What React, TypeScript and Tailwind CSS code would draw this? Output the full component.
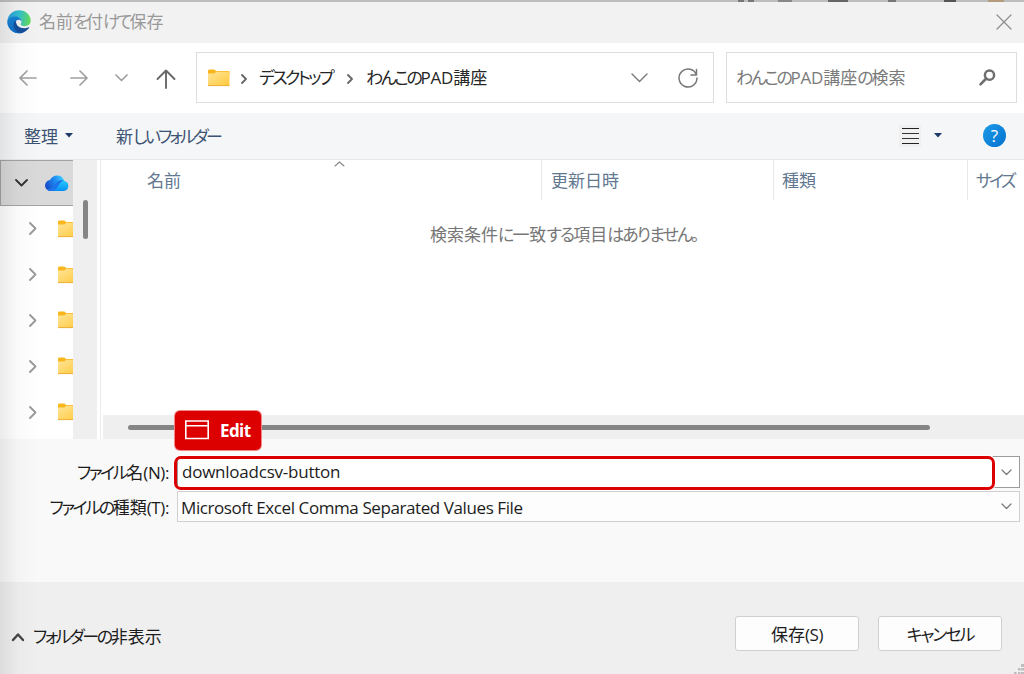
import React from 'react'
import clsx from 'clsx'

// Narrow proportional kana, as in the Windows UI font
function Kana({ children, className }: { children: React.ReactNode; className?: string }) {
  return (
    <span className={clsx("[font-feature-settings:'palt'] whitespace-nowrap", className || 'tracking-[-1.2px]')}>
      {children}
    </span>
  )
}

type StrokeProps = { className?: string; d: string; w: number; h: number; stroke?: number }

function Stroke({ className, d, w, h, stroke = 1.4 }: StrokeProps) {
  return (
    <svg className={clsx('shrink-0', className)} width={w} height={h} viewBox={`0 0 ${w} ${h}`} fill="none" stroke="currentColor" strokeWidth={stroke} strokeLinecap="round" strokeLinejoin="round">
      <path d={d} />
    </svg>
  )
}

function EdgeLogo() {
  return (
    <svg className="shrink-0" width="24" height="24" viewBox="0 0 24 24">
      <defs>
        <linearGradient id="edgeTop" x1="0" y1="0.4" x2="1" y2="0.5">
          <stop offset="0" stopColor="#2a9fdc" />
          <stop offset="0.5" stopColor="#32c0cc" />
          <stop offset="1" stopColor="#66dc58" />
        </linearGradient>
        <linearGradient id="edgeLeft" x1="0" y1="0" x2="0.5" y2="1">
          <stop offset="0" stopColor="#1a86d8" />
          <stop offset="1" stopColor="#0e6cc4" />
        </linearGradient>
      </defs>
      <path d="M0.3 11C1 4.500 6 0.200 12 0.200c7 0 11.700 5 11.700 10.300 0 3.600-2.700 5.700-6 5.700-2.500 0-4.200-.9-4.200-1.900 0-.7 1-1.200 1-2.900C14.500 8.800 11.500 7 8 7 4.500 7 1.500 8.500 0.300 11z" fill="url(#edgeTop)" />
      <path d="M0.200 12.500C0.200 9 3.500 6.600 7.700 6.600c3.700 0 6.700 2.100 6.700 4.800-.8-1.300-2-1.700-3-1.700-2.200 0-3.500 2.200-3.500 4.800 0 4.800 4 8.200 8.800 7.900A11.800 11.800 0 0 1 .2 12.500z" fill="url(#edgeLeft)" />
      <path d="M9 10.800c-2 1-2.400 2.500-2.400 4.200 0 4.500 3.600 8 8.200 8 3-.8 5.600-2.700 7.300-5.300.3-.6-.1-.8-.6-.5-1.500.8-3 1-4.400 1-4.700 0-8.300-2.700-8.100-7.400z" fill="#154e9b" />
    </svg>
  )
}

function CloudIcon() {
  return (
    <svg className="shrink-0" width="24" height="17" viewBox="0 0 24 17">
      <defs>
        <linearGradient id="cloudBack" x1="0" y1="0.6" x2="1" y2="0.3">
          <stop offset="0" stopColor="#1648c8" />
          <stop offset="0.6" stopColor="#1f93f5" />
          <stop offset="1" stopColor="#43cfff" />
        </linearGradient>
        <linearGradient id="cloudFront" x1="0.5" y1="0" x2="0.5" y2="1">
          <stop offset="0" stopColor="#26c8ff" />
          <stop offset="1" stopColor="#078ff5" />
        </linearGradient>
      </defs>
      <path d="M6 16a5.500 5.500 0 0 1-.9-11C6.500 2 9 .4 12.200.4c3.600 0 6.300 2.200 7.100 5.500L10 16z" fill="url(#cloudBack)" />
      <path d="M6 16c-1.500 0-3-.6-4-1.700 4-.3 7-2.500 8.500-5.500 2-3.500 5.500-4.200 8.800-2.900l-9 10.100z" fill="#1b74ea" />
      <path d="M6 16c3.800 0 5.300-2 7-4.800 2.200-3.800 4.500-5.600 6.500-5.200a5.100 5.100 0 0 1-.7 10z" fill="url(#cloudFront)" />
    </svg>
  )
}

function FolderIcon({ id, className }: { id: string; className?: string }) {
  return (
    <svg className={clsx('shrink-0', className)} width="22" height="18" viewBox="0 0 22 18">
      <defs>
        <linearGradient id={id} x1="0" y1="0" x2="1" y2="1">
          <stop offset="0" stopColor="#ffe59a" />
          <stop offset="1" stopColor="#ffc93c" />
        </linearGradient>
      </defs>
      <path d="M0 2Q0 .5 1 .5h5.500L8 2H21.500V6H0z" fill="#f9b71d" />
      <path d="M0 4.500h6.500L8.200 2.800H21.500v13.500H0z" fill={`url(#${id})`} />
      <path d="M0 16.600h21.500" stroke="#eead2c" strokeWidth="1" />
    </svg>
  )
}

const folders = ['f1', 'f2', 'f3', 'f4', 'f5']

function TitleBar() {
  return (
    <div className="h-[43px] shrink-0 bg-[#f2f2f2]">
      <div className="flex h-[2px] items-stretch bg-[#bdbdbd] pl-[738px]">
        <div className="w-1.5 bg-[#777]" />
        <div className="ml-1 w-1.5 bg-[#777]" />
        <div className="ml-6 w-3.5 bg-[#888]" />
        <div className="ml-9 w-5 bg-[#666]" />
        <div className="ml-10 w-2 bg-[#777]" />
        <div className="ml-12 w-3 bg-[#555]" />
        <div className="ml-8 w-4 bg-[#b39b7c]" />
      </div>
      <div className="flex h-[39px] items-center pr-3 pl-[7px]">
        <EdgeLogo />
        <div className="ml-2 grow text-[17px] text-[#999]">
          名前<Kana className="tracking-[-2.700px]">を</Kana>付<Kana className="tracking-[-2.900px]">けて</Kana>保存
        </div>
        <Stroke w={16} h={16} d="M1 1l14 14M15 1L1 15" className="text-[#8c8c8c]" stroke={1.2} />
      </div>
    </div>
  )
}

function AddressBar() {
  return (
    <div className="flex h-[70px] shrink-0 items-center bg-white pr-[7px] pb-px pl-[19px]">
      <Stroke w={18} h={18} d="M17 9H1M8 2L1 9l7 7" className="mt-px text-[#a0a0a0]" stroke={1.7} />
      <Stroke w={18} h={18} d="M1 9h16M10 2l7 7-7 7" className="mt-px ml-[33px] text-[#a0a0a0]" stroke={1.7} />
      <Stroke w={13} h={8} d="M1 1l5.500 5.500L12 1" className="ml-[27px] text-[#a0a0a0]" stroke={1.7} />
      <Stroke w={20} h={20} d="M10 19V1.500M1.500 10L10 1.500l8.500 8.500" className="mt-[3px] ml-7 text-[#686868]" stroke={1.9} />
      <div className="ml-5 flex h-[51px] w-[518px] shrink-0 items-center border border-[#dedede] pl-[11px]">
        <FolderIcon id="folderAddress" />
        <Stroke w={6} h={10} d="M1 1l4 4-4 4" className="mt-0.5 ml-[11px] text-[#666]" stroke={1.8} />
        <div className="ml-3 w-[78px] text-[17px] text-[#262626]"><Kana className="tracking-[-2.600px]">デスクトップ</Kana></div>
        <Stroke w={6} h={10} d="M1 1l4 4-4 4" className="mt-0.5 ml-2.5 text-[#666]" stroke={1.8} />
        <div className="ml-[13px] w-[130px] shrink-0 text-[17px] whitespace-nowrap text-[#262626]">
          <Kana className="tracking-[-2.400px]">わんこの</Kana><span className="tracking-[-0.200px]">PAD</span>講座
        </div>
        <Stroke w={17} h={10} d="M1 1l7.500 7.500L16 1" className="ml-[135px] text-[#777]" />
        <Stroke w={20} h={20} d="M18.500 7A9 9 0 1 0 19 10M18.500 1.500V7H13" className="ml-[30px] text-[#777]" stroke={1.5} />
      </div>
      <div className="ml-3 flex h-[51px] grow items-center border border-[#dedede] pr-5 pl-[9px]">
        <div className="grow text-[17px] whitespace-nowrap text-[#7a7a7a]">
          <Kana className="tracking-[-2.400px]">わんこの</Kana><span className="tracking-[-0.200px]">PAD</span>講座<Kana className="tracking-[-2.200px]">の</Kana>検索
        </div>
        <svg width="17" height="17" viewBox="0 0 17 17" fill="none" stroke="#6e6e6e">
          <circle cx="10.500" cy="6.200" r="4.600" strokeWidth="2.500" />
          <path d="M7.200 9.500L1.500 15.300" strokeWidth="2.600" strokeLinecap="round" />
        </svg>
      </div>
    </div>
  )
}

function CommandBar() {
  return (
    <div className="flex h-[47px] shrink-0 items-center border-b border-[#e7e9eb] bg-[#f4f6f8] pr-[18px] pb-px pl-6 text-[17px] text-[#3d5373]">
      <div className="mt-0.5">整理</div>
      <svg className="ml-[7px]" width="8" height="5" viewBox="0 0 8 5"><path d="M0 0h8L4 4.500z" fill="#1e3a66" /></svg>
      <div className="mt-0.5 ml-[43px] grow">
        新<Kana className="tracking-[-2.700px]">しいフォルダー</Kana>
      </div>
      <div className="flex size-[22px] flex-col items-center justify-between bg-[#f0f0f0] py-[3px]">
        <div className="h-px w-[17px] bg-[#222]" />
        <div className="h-px w-[17px] bg-[#333]" />
        <div className="h-px w-[17px] bg-[#333]" />
        <div className="h-px w-[17px] bg-[#222]" />
      </div>
      <svg className="ml-[13px]" width="8" height="5" viewBox="0 0 8 5"><path d="M0 0h8L4 4.500z" fill="#1e3a66" /></svg>
      <div className="ml-[41px] flex size-[23px] items-center justify-center rounded-full bg-gradient-to-br from-[#1c9be8] to-[#0572cf] font-['Open_Sans'] text-[17px] leading-none font-medium text-white">
        ?
      </div>
    </div>
  )
}

function Sidebar() {
  return (
    <div className="flex w-[101px] shrink-0 border-r border-[#ececec]">
      <div className="w-[73px] shrink-0 overflow-hidden">
        <div className="flex h-[46px] items-center border border-r-0 border-[#a3a3a3] bg-[#d9d9d9] pl-3.5">
          <Stroke w={13} h={8} d="M1 1l5.500 5.500L12 1" className="text-[#333]" stroke={1.8} />
          <div className="ml-[17px]"><CloudIcon /></div>
        </div>
        {folders.map((id) => (
          <div key={id} className="flex h-[45.800px] items-center pl-[29px]">
            <Stroke w={8} h={13} d="M1 1l5.500 5.500L1 12" className="text-[#999]" stroke={1.8} />
            <FolderIcon id={id} className="ml-[21px]" />
          </div>
        ))}
      </div>
      <div className="w-6 bg-[#efefef] pt-10 pl-2.5">
        <div className="h-[39px] w-[5px] rounded-full bg-[#858585]" />
      </div>
    </div>
  )
}

function FileList() {
  return (
    <div className="flex min-w-0 grow flex-col overflow-hidden pl-0.5">
      <div className="flex h-10 shrink-0 text-[17px] leading-[41px] whitespace-nowrap text-[#627890]">
        <div className="flex w-[438px] shrink-0 pl-11">
          <div>名前</div>
          <Stroke w={11} h={6} d="M1 5l4.500-4L10 5" className="mt-px ml-[153px] text-[#888]" stroke={1.1} />
        </div>
        <div className="w-[232px] shrink-0 border-l border-[#e8e8e8] pl-[9px]">更新日時</div>
        <div className="w-[194px] shrink-0 border-l border-[#e8e8e8] pl-2">種類</div>
        <div className="grow border-l border-[#e8e8e8] pl-2"><Kana className="tracking-[-2.800px]">サイズ</Kana></div>
      </div>
      <div className="grow pt-[23px] pl-[327px] text-[17px] leading-6 whitespace-nowrap text-[#777]">
        検索条件<Kana className="tracking-[-2px]">に</Kana>一致<Kana className="tracking-[-1.900px]">する</Kana>項目<Kana className="tracking-[-1.900px]">はありません。</Kana>
      </div>
      <div className="flex h-6 shrink-0 items-center bg-[#efefef] pl-[25px]">
        <div className="h-[5px] w-[802px] rounded-full bg-[#858585]" />
      </div>
    </div>
  )
}

function Fields() {
  return (
    <div className="relative h-[143px] shrink-0 bg-[#f9f9f9] pt-[17px] pr-1 text-[17px] text-[#1c1c1c]">
      <div className="flex h-8 items-center">
        <div className="mt-0.5 w-[169px] text-right whitespace-nowrap">
          <Kana className="tracking-[-2.400px]">ファイル</Kana>名<span className="tracking-[-0.400px]">(N):</span>
        </div>
        <div className="ml-2 flex h-8 grow items-center justify-between border border-[#9c9c9c] bg-white pr-[7px] pl-1">
          <span className="tracking-[-0.230px]">downloadcsv-button</span>
          <Stroke w={11} h={7} d="M1 1l4.500 4.500L10 1" className="text-[#777]" stroke={1.2} />
        </div>
      </div>
      <div className="mt-[3px] flex h-[31px] items-center">
        <div className="mt-0.5 w-[169px] text-right whitespace-nowrap">
          <Kana className="tracking-[-2.400px]">ファイルの</Kana>種類<span className="tracking-[-0.400px]">(T):</span>
        </div>
        <div className="ml-2 flex h-[31px] grow items-center justify-between border border-[#d0d0d0] bg-[#fdfdfd] pr-[7px] pl-[3px]">
          <span className="mt-0.5 tracking-[-0.410px]">Microsoft Excel Comma Separated Values File</span>
          <Stroke w={11} h={7} d="M1 1l4.500 4.500L10 1" className="text-[#777]" stroke={1.2} />
        </div>
      </div>

      {/* element highlight over the file name box */}
      <div className="absolute top-[17px] left-[174px] h-[34px] w-[821px] rounded-[7px] border-3 border-[#dc0000] ring-1 ring-white" />
      <div className="absolute -top-7 left-[175px] flex h-[39px] w-[86px] items-center rounded-[5px] bg-[#dc0000] pl-2.5 font-bold text-white ring-1 ring-[#e88]">
        <svg className="-mt-px" width="24" height="20" viewBox="0 0 24 20" fill="none" stroke="#fff" strokeWidth="1.600">
          <path d="M.8 1h22.400v17.500H.8zM.8 5.800h22.400" />
        </svg>
        <span className="mt-px ml-[11px] text-[17px] tracking-[-0.600px]">Edit</span>
      </div>
    </div>
  )
}

function Footer() {
  return (
    <div className="relative flex h-[92px] shrink-0 bg-[#efefef] pr-[22px] pl-[11px] text-[17px] text-[#1c1c1c]">
      <div className="flex grow items-center pt-[17px]">
        <Stroke w={14} h={10} d="M2 8l5-5.500L12 8" className="text-[#444]" stroke={2.4} />
        <div className="ml-2"><Kana className="tracking-[-2.400px]">フォルダーの</Kana>非表示</div>
      </div>
      <button className="mt-[34px] h-[35px] w-[124px] rounded-[3px] border border-[#d0d0d0] bg-[#fdfdfd] pt-0.5">
        保存<span className="tracking-[-0.400px]">(S)</span>
      </button>
      <button className="mt-[34px] ml-[19px] h-[35px] w-[124px] rounded-[3px] border border-[#d0d0d0] bg-[#fdfdfd] pt-0.5">
        <Kana className="tracking-[-2px]">キャンセル</Kana>
      </button>
      <svg className="absolute right-0 bottom-0" width="10" height="10" viewBox="0 0 10 10" fill="#bdbdbd">
        <path d="M7 0h3v3H7zM4 4h2.500v2.500H4zM7 4h3v2.500H7zM0 8h2.500v2H0zM4 8h2.500v2H4zM7 8h3v2H7z" />
      </svg>
    </div>
  )
}

export default function App() {
  return (
    <div className="relative flex h-[674px] w-[1024px] flex-col overflow-hidden bg-white font-['Open_Sans','Noto_Sans_CJK_JP',sans-serif]">
      <TitleBar />
      <AddressBar />
      <CommandBar />
      <div className="flex h-[279px] shrink-0">
        <Sidebar />
        <FileList />
      </div>
      <Fields />
      <Footer />
      {/* soft shadow along the left window edge */}
      <div className="pointer-events-none absolute inset-y-0 left-0 w-10 bg-gradient-to-r from-black/8 via-black/2 via-45% to-transparent" />
    </div>
  )
}
